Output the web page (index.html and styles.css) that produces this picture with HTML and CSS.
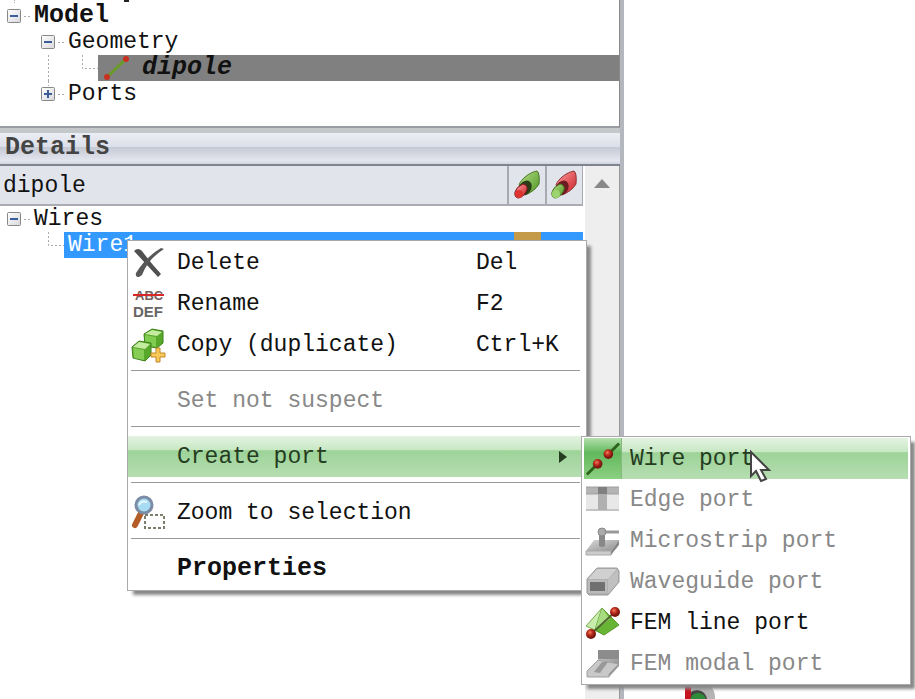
FILE: index.html
```html
<!DOCTYPE html>
<html lang="en">
<head>
    <meta charset="UTF-8">
    <meta name="viewport" content="width=device-width, initial-scale=1.0">
    <title>Model tree</title>
    <link rel="stylesheet" href="styles.css">
</head>
<body>
    <!-- shared tree symbols -->
    <svg class="defs" aria-hidden="true">
        <defs>
            <linearGradient id="box" x1="0" y1="0" x2="1" y2="1"><stop offset="0" stop-color="#fff"/><stop offset="1" stop-color="#d8d8dc"/></linearGradient>
            <linearGradient id="green" x1="0" y1="0" x2="1" y2="1"><stop offset="0" stop-color="#b8e08c"/><stop offset="1" stop-color="#4c9420"/></linearGradient>
            <linearGradient id="red" x1="0" y1="0" x2="1" y2="1"><stop offset="0" stop-color="#ffa0a0"/><stop offset="1" stop-color="#c81c24"/></linearGradient>
            <linearGradient id="gray" x1="0" y1="0" x2="1" y2="1"><stop offset="0" stop-color="#d8d8d8"/><stop offset="1" stop-color="#909090"/></linearGradient>
            <radialGradient id="ball" cx="0.4" cy="0.35"><stop offset="0" stop-color="#f08060"/><stop offset="0.5" stop-color="#c03020"/><stop offset="1" stop-color="#7c1810"/></radialGradient>
        </defs>
        <symbol id="minus" viewBox="0 0 34 26">
            <path d="M24 13.5H32" stroke="#aaa" stroke-dasharray="2 2"/>
            <rect x="7.5" y="6.5" width="13" height="13" rx="1" fill="url(#box)" stroke="#888"/>
            <path d="M10 13H18" stroke="#3c5c9c" stroke-width="2"/>
        </symbol>
        <symbol id="plus" viewBox="0 0 34 26">
            <path d="M14.5 0V5M24 13.5H30" stroke="#aaa" stroke-dasharray="2 2"/>
            <rect x="7.5" y="6.5" width="13" height="13" rx="1" fill="url(#box)" stroke="#888"/>
            <path d="M10 13H18M14 9V17" stroke="#3c5c9c" stroke-width="2"/>
        </symbol>
    </svg>

    <main class="app">
        <div class="side">
            <section class="tree" aria-label="Model tree">
                <svg class="cut" width="140" height="3"><path d="M14.5 0V3" stroke="#aaa" stroke-dasharray="1 1"/><path d="M124 1H129" stroke="#222" stroke-width="2"/></svg>
                <div class="row">
                    <button class="toggle" aria-label="Collapse Model"><svg width="34" height="26"><use href="#minus"/></svg></button>
                    <b>Model</b>
                </div>
                <div class="row">
                    <span class="guide"></span>
                    <button class="toggle" aria-label="Collapse Geometry"><svg width="34" height="26"><use href="#minus"/></svg></button>
                    <span>Geometry</span>
                </div>
                <div class="row">
                    <span class="guide"></span>
                    <svg width="64" height="26"><path d="M14.5 0V26M48.5 0V13.5H64" fill="none" stroke="#aaa" stroke-dasharray="2 2"/></svg>
                    <span class="current">
                        <svg width="36" height="26"><path d="M9 22L28 4" stroke="#6a9a28" stroke-width="3"/><circle cx="9" cy="22" r="3" fill="#c83020"/><circle cx="28" cy="4" r="3" fill="#c83020"/></svg>
                        dipole
                    </span>
                </div>
                <div class="row">
                    <span class="guide"></span>
                    <button class="toggle" aria-label="Expand Ports"><svg width="34" height="26"><use href="#plus"/></svg></button>
                    <span>Ports</span>
                </div>
            </section>

            <h2 class="title">Details</h2>

            <section class="details">
                <div class="list">
                    <div class="columns">
                        <span class="name">dipole</span>
                        <button class="col" aria-label="Core">
                            <svg width="26" height="30" viewBox="0 0 26 30"><path d="M5 15C7 9 16 2 23 1Q26 3 25 14Q21 21 11 25Z" fill="url(#green)" stroke="#4a7424"/><ellipse cx="11" cy="18" rx="6" ry="8" fill="#2c3c18" transform="rotate(35 11 18)"/><path d="M1 22Q2 17 9 14Q14 15 13 20Q9 28 4 28Q0 27 1 22Z" fill="url(#red)" stroke="#80141c"/><ellipse cx="5" cy="24" rx="4" ry="4" fill="#dc3430"/></svg>
                        </button>
                        <button class="col" aria-label="Coating">
                            <svg width="26" height="30" viewBox="0 0 26 30"><path d="M5 15C7 9 16 2 23 1Q26 3 25 14Q21 21 11 25Z" fill="url(#red)" stroke="#8c3438"/><ellipse cx="11" cy="18" rx="6" ry="8" fill="#6c1c20" transform="rotate(35 11 18)"/><path d="M1 22Q2 17 9 14Q14 15 13 20Q9 28 4 28Q0 27 1 22Z" fill="url(#green)" stroke="#4a7424"/><ellipse cx="5" cy="24" rx="4" ry="4" fill="#9cd470"/></svg>
                        </button>
                    </div>
                    <div class="row">
                        <button class="toggle" aria-label="Collapse Wires"><svg width="34" height="26"><use href="#minus"/></svg></button>
                        <span>Wires</span>
                    </div>
                    <div class="row">
                        <svg width="64" height="26"><path d="M48.5 0V13.5H64" fill="none" stroke="#aaa" stroke-dasharray="2 2"/></svg>
                        <span class="selected">Wire1</span>
                        <span class="swatch"></span>
                        <span class="rest"></span>
                    </div>
                </div>
                <div class="scroll">
                    <svg width="16" height="9"><path d="M8 0L16 9H0Z" fill="#888"/></svg>
                </div>
            </section>
        </div>
        <div class="view"></div>
    </main>

    <svg class="gizmo" width="34" height="22"><circle cx="16" cy="17" r="15" fill="#b4b4b4"/><circle cx="13" cy="20" r="10" fill="#444"/><rect x="1" y="0" width="6" height="22" fill="#c41420"/><circle cx="14" cy="21" r="8" fill="#2c8c38"/></svg>

    <menu class="menu context">
        <li><button class="item">
            <svg class="icon" width="36" height="36" viewBox="0 0 36 36"><path d="M4 6Q8 2 12 6Q20 17 31 29L28 32Q17 20 4 6Z" fill="#505050"/><path d="M34 4L31 3Q16 12 6 28Q5 32 9 32L12 30Q18 14 34 4Z" fill="#585858"/></svg>
            <span>Delete</span><kbd>Del</kbd>
        </button></li>
        <li><button class="item">
            <svg class="icon" width="36" height="36" viewBox="0 0 36 36"><text x="5" y="14" class="abc">ABC</text><path d="M3 9H34" stroke="#d82828" stroke-width="2"/><text x="3" y="31" class="def">DEF</text></svg>
            <span>Rename</span><kbd>F2</kbd>
        </button></li>
        <li><button class="item">
            <svg class="icon" width="36" height="36" viewBox="0 0 36 36"><path d="M14 7L22 2L33 4V16L27 21L15 19Z" fill="#58a82c" stroke="#3c8018"/><path d="M15 7L22 3L32 5L27 9Z" fill="#c4eca0"/><path d="M15 8L26 10V20L15 18Z" fill="#80cc50"/><path d="M2 20L9 14L21 16V28L15 34L3 31Z" fill="#58a82c" stroke="#3c8018"/><path d="M3 20L9 15L20 17L15 22Z" fill="#c4eca0"/><path d="M3 21L14 23V33L4 31Z" fill="#84cc54"/><path d="M26 21H30V26H35V30H30V35H26V30H21V26H26Z" fill="#f8c858" stroke="#c08828"/></svg>
            <span>Copy (duplicate)</span><kbd>Ctrl+K</kbd>
        </button></li>
        <li class="line"></li>
        <li><button class="item" disabled><span>Set not suspect</span></button></li>
        <li class="line"></li>
        <li><button class="item active">
            <span>Create port</span>
            <svg class="arrow" width="8" height="12"><path d="M0 0L8 6L0 12Z" fill="#243c20"/></svg>
        </button></li>
        <li class="line"></li>
        <li><button class="item">
            <svg class="icon" width="36" height="36" viewBox="0 0 36 36"><path d="M11 18L5 30" stroke="#b45c28" stroke-width="6" stroke-linecap="round"/><circle cx="14" cy="10" r="8" fill="#a8dcf4" stroke="#7c8ca4" stroke-width="3"/><path d="M9 10Q11 5 17 7" stroke="#e8f8ff" stroke-width="2" fill="none"/><rect x="15" y="20" width="19" height="13" fill="#fff" stroke="#78806c" stroke-width="2" stroke-dasharray="3 2"/></svg>
            <span>Zoom to selection</span>
        </button></li>
        <li class="line"></li>
        <li><button class="item"><b>Properties</b></button></li>
    </menu>

    <menu class="menu ports">
        <li><button class="item active">
            <svg class="icon lit" width="38" height="41" viewBox="0 0 38 41"><path d="M3 37L13 27M25 16L36 5" stroke="#2c641c" stroke-width="3"/><circle cx="14" cy="26" r="5" fill="url(#ball)"/><circle cx="25" cy="16" r="5" fill="url(#ball)"/></svg>
            <span>Wire port</span>
        </button></li>
        <li><button class="item" disabled>
            <svg class="icon" width="38" height="36" viewBox="0 0 38 36"><rect x="2" y="5" width="33" height="24" fill="#e8e8e8"/><path d="M2 5H35V12H2Z" fill="#b4b4b4"/><path d="M2 5H35M2 12H35M2 28H35" stroke="#a0a0a0"/><rect x="14" y="6" width="9" height="22" fill="#b0b0b0"/><rect x="14" y="5" width="9" height="7" fill="#808080"/></svg>
            <span>Edge port</span>
        </button></li>
        <li><button class="item" disabled>
            <svg class="icon" width="38" height="36" viewBox="0 0 38 36"><path d="M10 17H35L27 28H2Z" fill="url(#gray)"/><path d="M2 28H27V32H2Z" fill="#ccc" stroke="#aaa"/><path d="M27 28L35 17V22L27 32Z" fill="#888"/><path d="M19 9H35" stroke="#999" stroke-width="3"/><path d="M15 11H21V23Q18 25 15 23Z" fill="#888"/><circle cx="18" cy="9" r="4" fill="#aaa" stroke="#888"/></svg>
            <span>Microstrip port</span>
        </button></li>
        <li><button class="item" disabled>
            <svg class="icon" width="38" height="36" viewBox="0 0 38 36"><path d="M3 15L13 4H33L35 7V18L24 31H5L3 29Z" fill="#b0b0b0" stroke="#999"/><path d="M4 15L13 5H33L24 15Z" fill="#d0d0d0"/><path d="M24 15L34 6V18L24 30Z" fill="#c0c0c0"/><rect x="5" y="17" width="17" height="11" fill="#707070" stroke="#bbb" stroke-width="2"/></svg>
            <span>Waveguide port</span>
        </button></li>
        <li><button class="item">
            <svg class="icon" width="38" height="36" viewBox="0 0 38 36"><path d="M2 21L18 3L19 29Z" fill="#c8ecac" stroke="#74a850"/><path d="M18 3L35 20L20 30L11 25Z" fill="#68b434" stroke="#58982c"/><path d="M18 3L26 14L11 25Z" fill="#a8dc80"/><path d="M7 29L31 7" stroke="#506830" stroke-width="2"/><circle cx="7" cy="29" r="5" fill="url(#ball)"/><circle cx="31" cy="7" r="5" fill="url(#ball)"/></svg>
            <span>FEM line port</span>
        </button></li>
        <li><button class="item" disabled>
            <svg class="icon" width="38" height="36" viewBox="0 0 38 36"><path d="M14 4H35V19H14Z" fill="url(#gray)"/><path d="M14 4H35V13H14Z" fill="#8c8c8c"/><path d="M3 25L14 14L35 18L25 28V31H3Z" fill="#c8c8c8" stroke="#a0a0a0"/><path d="M10 26L18 16H24L16 27Z" fill="#999"/><path d="M25 28L35 17V20L25 31Z" fill="#999"/></svg>
            <span>FEM modal port</span>
        </button></li>
    </menu>

    <svg class="cursor" width="24" height="34" viewBox="0 0 24 34"><path d="M2 2V26L7 21L12 31L17 29L12 20H20Z" fill="#fff" stroke="#444" stroke-width="2"/></svg>
</body>
</html>
```

FILE: styles.css
```css
* {
    box-sizing: border-box;
}
body {
    margin: 0;
    height: 100vh;
    overflow: hidden;
    position: relative;
    background: #fff;
    color: #111;
    font-family: "Liberation Mono", monospace;
    font-size: 23px;
    line-height: 26px;
}
svg {
    display: block;
    flex: none;
}
button {
    font: inherit;
    color: inherit;
    background: none;
    border: none;
    padding: 0;
}
b {
    font-size: 25px;
}
.defs {
    position: absolute;
    width: 0;
    height: 0;
}
.app {
    display: grid;
    grid-template-columns: 15fr 7fr;
    height: 100%;
}
.side {
    display: flex;
    flex-direction: column;
    border-right: 4px solid #b4b8be;
    min-width: 0;
}
.tree {
    padding-bottom: 19px;
    border-bottom: 2px solid #999ca0;
    border-right: 1px solid #888;
}
.row {
    display: flex;
    height: 26px;
    white-space: nowrap;
}
.guide {
    width: 34px;
}
.current {
    display: flex;
    flex: 1;
    gap: 8px;
    background: #808080;
    font-size: 25px;
    font-weight: bold;
    font-style: italic;
}
.title {
    margin: 0;
    padding: 2px 5px 3px;
    border-top: 5px solid #c4c8cb;
    border-bottom: 2px solid #80848e;
    background: linear-gradient(#eceef5, #dcdfe9 44%, #c5c9d4 46%, #e4e6ef 90%, #d0d3dc);
    color: #444;
    font-size: 25px;
    line-height: 26px;
}
.details {
    display: flex;
    flex: 1;
    border-right: 1px solid #999;
}
.list {
    flex: 1;
    margin-right: 2px;
}
.columns {
    display: flex;
    height: 40px;
    border-bottom: 2px solid #aaacb2;
    background: #e2e4ec;
}
.name {
    flex: 1;
    padding-left: 3px;
    line-height: 40px;
}
.col {
    display: flex;
    align-items: center;
    justify-content: center;
    width: 38px;
    border-left: 2px solid #a8aab2;
}
.col:last-child {
    border-right: 1px solid #a8aab2;
}
.selected {
    flex: 1;
    padding-left: 4px;
    background: #3399ff;
    color: #fff;
}
.swatch {
    width: 27px;
    background: #c49a48;
}
.rest {
    width: 42px;
    background: #3399ff;
}
.scroll {
    display: flex;
    justify-content: center;
    width: 34px;
    padding-top: 13px;
    background: #eeeeef;
}
.menu {
    position: absolute;
    margin: 0;
    padding: 0;
    list-style: none;
    background: #fff;
    border: 1px solid #aaa;
    box-shadow: 5px 5px 3px -1px #888;
}
.context {
    left: 127px;
    top: 240px;
    width: 460px;
    padding: 1px 0;
}
.ports {
    left: 581px;
    top: 436px;
    width: 330px;
    padding: 1px 2px 0;
}
.item {
    display: flex;
    align-items: center;
    position: relative;
    width: 100%;
    height: 41px;
    padding-left: 49px;
    text-align: left;
    white-space: nowrap;
}
.item:disabled {
    color: #888;
}
.item span {
    flex: 1;
}
.item kbd {
    width: 110px;
    font: inherit;
}
.active {
    background: linear-gradient(#e4f4e2, #c8e8c4 33%, #9dd398 36%, #b6deb1);
    color: #243c20;
}
.icon {
    position: absolute;
    left: 2px;
}
.ports .item {
    padding-left: 46px;
}
.ports .icon {
    left: 0;
}
.lit {
    background: linear-gradient(#b4e0ae, #62b85c 36%, #8cd082);
    border-right: 1px solid #88b880;
}
.arrow {
    margin-right: 19px;
}
.line {
    height: 1px;
    margin: 5px 6px 9px 3px;
    background: #999;
}
.abc {
    font: bold 13px "Liberation Sans", sans-serif;
    fill: #776060;
}
.def {
    font: bold 15px "Liberation Sans", sans-serif;
    fill: #666;
}
.gizmo {
    position: absolute;
    left: 684px;
    top: 680px;
}
.cursor {
    position: absolute;
    left: 749px;
    top: 450px;
}
```
